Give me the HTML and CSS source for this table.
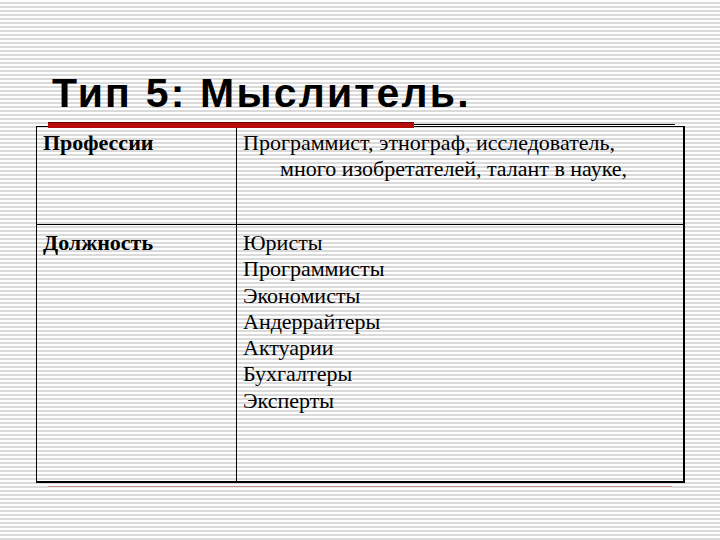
FILE: index.html
```html
<!DOCTYPE html>
<html lang="ru">
<head>
<meta charset="utf-8">
<title>Тип 5: Мыслитель.</title>
<link rel="stylesheet" href="styles.css">
</head>
<body>
<div class="slide">
  <h1 class="title">Тип 5: Мыслитель.</h1>
  <div class="rule"><div class="red"></div><div class="line"></div></div>
  <table class="grid">
    <colgroup><col class="c1"><col class="c2"></colgroup>
    <tr class="r1">
      <td class="head">Профессии</td>
      <td class="body hang">Программист, этнограф, исследователь,<br>много изобретателей, талант в науке,</td>
    </tr>
    <tr class="r2">
      <td class="head">Должность</td>
      <td class="body">Юристы<br>Программисты<br>Экономисты<br>Андеррайтеры<br>Актуарии<br>Бухгалтеры<br>Эксперты</td>
    </tr>
  </table>
  <div class="foot"></div>
</div>
</body>
</html>
```

FILE: styles.css
```css
html, body {
  margin: 0;
  padding: 0;
}
body {
  width: 720px;
  height: 540px;
  overflow: hidden;
  background: repeating-linear-gradient(to bottom, #ffffff 0, #ffffff 2px, #dadada 2px, #dadada 4px);
}
.slide {
  padding-top: 73px;
}
.title {
  margin: 0 0 8px 52px;
  font-family: "Liberation Sans", Arial, sans-serif;
  font-weight: bold;
  font-size: 41px;
  line-height: 41px;
  letter-spacing: 2.2px;
  color: #000;
}
.rule {
  position: relative;
  z-index: 1;
  display: flex;
  align-items: flex-start;
  margin-left: 48px;
  width: 627px;
  height: 6px;
}
.rule .red {
  width: 366px;
  height: 5px;
  background: #b70c0c;
  border-top: 1px solid #6a0000;
}
.rule .line {
  flex: 1;
  height: 1px;
  margin-top: 2px;
  background: #000;
}
.grid {
  margin: -2px 0 0 36px;
  width: 647px;
  border-collapse: collapse;
  table-layout: fixed;
  font-family: "Liberation Serif", "Times New Roman", serif;
  font-size: 22px;
  line-height: 26.3px;
  color: #000;
  border-right: 2px solid #000;
  border-bottom: 2px solid #000;
}
.c1 { width: 200px; }
.c2 { width: 447px; }
.grid td {
  border: 1px solid #000;
  vertical-align: top;
  padding: 3px 4px 0 6px;
}
.grid .r1 td { height: 94px; }
.grid .r2 td { height: 251px; padding-top: 5px; }
.grid .head {
  font-weight: bold;
}
.grid .hang {
  padding-left: 43px;
  text-indent: -37px;
}
.foot {
  margin: 3px 0 0 48px;
  width: 624px;
  height: 1px;
  background: #c88a8a;
  border-bottom: 1px solid #e3efe3;
}
```
